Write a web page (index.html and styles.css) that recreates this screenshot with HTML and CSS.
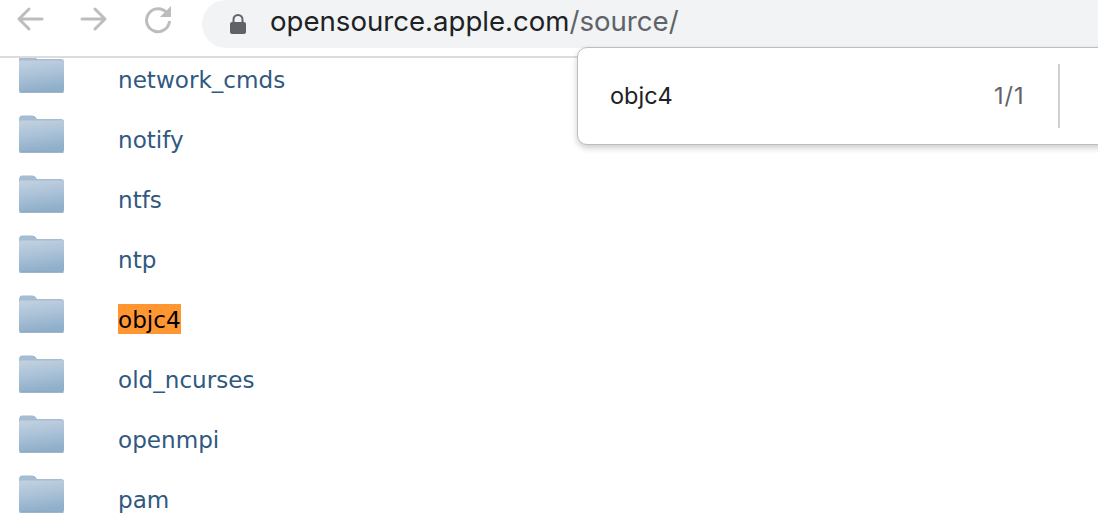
FILE: index.html
```html
<!DOCTYPE html>
<html lang="en">
<head>
    <meta charset="UTF-8">
    <meta name="viewport" content="width=device-width, initial-scale=1.0">
    <title>Index of /source</title>
    <link rel="stylesheet" href="styles.css">
</head>
<body>
    <svg class="defs" width="0" height="0">
        <defs>
            <linearGradient id="folderBody" x1="0" y1="0" x2="0.2" y2="1">
                <stop offset="0" stop-color="#c4d2e0"/>
                <stop offset="0.55" stop-color="#a8c0d6"/>
                <stop offset="1" stop-color="#8fafcb"/>
            </linearGradient>
            <symbol id="folder" viewBox="0 0 46 39">
                <path d="M1 6 Q1 1.500 4 1.500 H14 Q17 1.500 18 3.500 L19 5 H43 Q46 5 46 8 V36 Q46 38 44 38 H3 Q1 38 1 36 Z" fill="#a6bcd2"/>
                <path d="M1 8 Q1 6.500 3 6.500 H44 Q46 6.500 46 9 V36 Q46 38 44 38 H3 Q1 38 1 36 Z" fill="url(#folderBody)"/>
                <rect x="1.500" y="37.500" width="44" height="1.500" fill="#8ba3b9" opacity="0.8"/>
            </symbol>
        </defs>
    </svg>

    <header class="toolbar">
        <svg class="nav-icon back" width="30" height="30" viewBox="0 0 30 30">
            <path d="M27 15 H4 M14 5 L4 15 L14 25" fill="none" stroke="#bdbdbd" stroke-width="3" stroke-linecap="round" stroke-linejoin="round"/>
        </svg>
        <svg class="nav-icon forward" width="30" height="30" viewBox="0 0 30 30">
            <path d="M3 15 H26 M16 5 L26 15 L16 25" fill="none" stroke="#bdbdbd" stroke-width="3" stroke-linecap="round" stroke-linejoin="round"/>
        </svg>
        <svg class="nav-icon reload" width="30" height="30" viewBox="0 0 30 30">
            <path d="M24 9 A11.500 11.500 0 1 0 26.500 17" fill="none" stroke="#bdbdbd" stroke-width="3"/>
            <path d="M28 2 V13 H17 Z" fill="#bdbdbd"/>
        </svg>
        <div class="omnibox">
            <svg class="lock" width="18" height="22" viewBox="0 0 18 22">
                <path d="M4.500 9 V6.500 a4.500 4.500 0 0 1 9 0 V9" fill="none" stroke="#5f6368" stroke-width="2"/>
                <rect x="1" y="9" width="16" height="12" rx="2" fill="#5f6368"/>
            </svg>
            <span class="url">opensource.apple.com<span class="url-path">/source/</span></span>
        </div>
    </header>

    <div class="find-bar">
        <span class="find-query">objc4</span>
        <span class="find-count">1/1</span>
        <span class="find-divider"></span>
    </div>

    <main class="listing">
        <div class="row"><svg class="folder"><use href="#folder"/></svg><a class="name">network_cmds</a></div>
        <div class="row"><svg class="folder"><use href="#folder"/></svg><a class="name">notify</a></div>
        <div class="row"><svg class="folder"><use href="#folder"/></svg><a class="name">ntfs</a></div>
        <div class="row"><svg class="folder"><use href="#folder"/></svg><a class="name">ntp</a></div>
        <div class="row"><svg class="folder"><use href="#folder"/></svg><a class="name match">objc4</a></div>
        <div class="row"><svg class="folder"><use href="#folder"/></svg><a class="name">old_ncurses</a></div>
        <div class="row"><svg class="folder"><use href="#folder"/></svg><a class="name">openmpi</a></div>
        <div class="row"><svg class="folder"><use href="#folder"/></svg><a class="name">pam</a></div>
    </main>
</body>
</html>
```

FILE: styles.css
```css
html, body {
    height: 100%;
}

body {
    margin: 0;
    background-color: #ffffff;
    overflow: hidden;
    display: flex;
    flex-direction: column;
}

.defs {
    position: absolute;
}

.toolbar {
    height: 56px;
    flex-shrink: 0;
    display: flex;
    align-items: flex-start;
    border-bottom: 2px solid #dcdcdc;
    background-color: #ffffff;
    position: relative;
    z-index: 1;
}

.nav-icon {
    flex-shrink: 0;
    margin-top: 4px;
}

.back {
    margin-left: 15px;
}

.forward {
    margin-left: 34px;
}

.reload {
    margin-left: 34px;
}

.omnibox {
    width: 896px;
    height: 48px;
    margin-left: 29px;
    padding-left: 27px;
    box-sizing: border-box;
    background-color: #f1f3f4;
    border-radius: 24px 0 0 24px;
    display: flex;
    align-items: center;
}

.lock {
    flex-shrink: 0;
}

.url {
    margin-left: 23px;
    margin-top: -6px;
    font-family: "Inter", sans-serif;
    font-size: 27.600px;
    color: #202124;
    white-space: nowrap;
}

.url-path {
    color: #5f6368;
}

.find-bar {
    position: absolute;
    z-index: 2;
    top: 47px;
    left: 577px;
    width: 540px;
    height: 98px;
    box-sizing: border-box;
    padding: 16px 0 16px 32px;
    background-color: #ffffff;
    border: 1px solid #bdbdbd;
    border-radius: 10px;
    box-shadow: 0 3px 6px rgba(0, 0, 0, 0.2);
    display: flex;
    align-items: center;
    font-family: "Inter", sans-serif;
    font-size: 23.500px;
}

.find-query {
    color: #202124;
    width: 384px;
    margin-top: -2px;
}

.find-count {
    color: #5f6368;
    width: 64px;
    margin-top: -2px;
    letter-spacing: 1px;
}

.find-divider {
    width: 2px;
    height: 64px;
    background-color: #d0d0d0;
}

.listing {
    margin-top: -1px;
    margin-left: 18px;
}

.row {
    height: 60px;
    display: flex;
    align-items: flex-start;
}

.folder {
    width: 46px;
    height: 39px;
    flex-shrink: 0;
    margin-top: -3px;
}

.name {
    margin-left: 54px;
    margin-top: 7px;
    height: 30px;
    line-height: 33px;
    font-family: "DejaVu Sans", sans-serif;
    font-size: 23.100px;
    color: #30597f;
}

.match {
    background-color: #ff9632;
    color: #000000;
}
```
